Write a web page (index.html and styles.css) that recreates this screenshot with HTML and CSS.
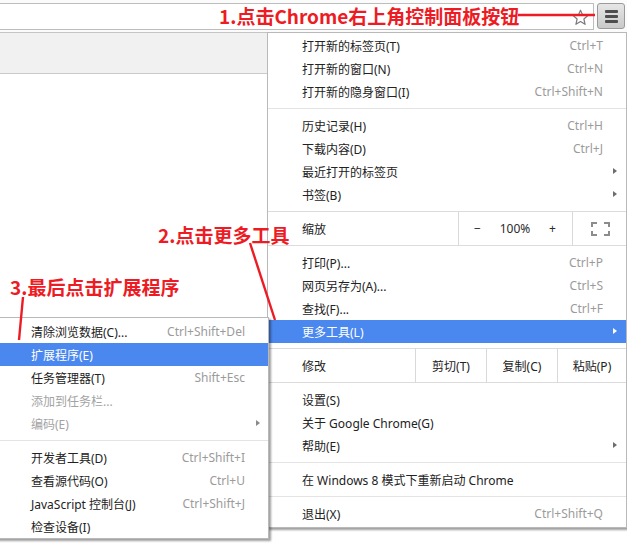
FILE: index.html
```html
<!DOCTYPE html>
<html lang="zh-CN">
<head>
<meta charset="utf-8">
<title>Chrome 扩展程序</title>
<link rel="stylesheet" href="styles.css">
</head>
<body>
<div class="browser">
  <div class="toolbar">
    <div class="omnibox">
      <svg class="star" width="17" height="17" viewBox="0 0 17 17"><path d="M8.5 1.2 L10.6 6.1 L15.9 6.5 L11.9 10 L13.1 15.3 L8.5 12.5 L3.9 15.3 L5.1 10 L1.1 6.5 L6.4 6.1 Z" fill="#fff" stroke="#7a7a7a" stroke-width="1.2" stroke-linejoin="round"/></svg>
    </div>
    <div class="menu-btn"><span></span><span></span><span></span></div>
  </div>
  <div class="bookmarks"></div>
  <div class="content"></div>
</div>

<div class="menu main-menu">
  <div class="item"><span class="label">打开新的标签页(T)</span><span class="key">Ctrl+T</span></div>
  <div class="item"><span class="label">打开新的窗口(N)</span><span class="key">Ctrl+N</span></div>
  <div class="item"><span class="label">打开新的隐身窗口(I)</span><span class="key">Ctrl+Shift+N</span></div>
  <div class="sep"></div>
  <div class="item"><span class="label">历史记录(H)</span><span class="key">Ctrl+H</span></div>
  <div class="item"><span class="label">下载内容(D)</span><span class="key">Ctrl+J</span></div>
  <div class="item sub"><span class="label">最近打开的标签页</span></div>
  <div class="item sub"><span class="label">书签(B)</span></div>
  <div class="sep sep-tight"></div>
  <div class="btn-row">
    <span class="label">缩放</span>
    <div class="cell zoom-cell"><span>−</span><span>100%</span><span>+</span></div>
    <div class="cell fs-cell">
      <svg width="19" height="14" viewBox="0 0 19 14"><path d="M1 5 V1 H6 M13 1 H18 V5 M18 9 V13 H13 M6 13 H1 V9" fill="none" stroke="#8c8c8c" stroke-width="2"/></svg>
    </div>
  </div>
  <div class="sep sep-tight"></div>
  <div class="item"><span class="label">打印(P)...</span><span class="key">Ctrl+P</span></div>
  <div class="item"><span class="label">网页另存为(A)...</span><span class="key">Ctrl+S</span></div>
  <div class="item"><span class="label">查找(F)...</span><span class="key">Ctrl+F</span></div>
  <div class="item sub active"><span class="label">更多工具(L)</span></div>
  <div class="sep sep-tight"></div>
  <div class="btn-row">
    <span class="label">修改</span>
    <div class="cell edit-cell">剪切(T)</div>
    <div class="cell edit-cell">复制(C)</div>
    <div class="cell edit-cell last">粘贴(P)</div>
  </div>
  <div class="sep sep-tight"></div>
  <div class="item"><span class="label">设置(S)</span></div>
  <div class="item"><span class="label">关于 Google Chrome(G)</span></div>
  <div class="item sub"><span class="label">帮助(E)</span></div>
  <div class="sep"></div>
  <div class="item"><span class="label">在 Windows 8 模式下重新启动 Chrome</span></div>
  <div class="sep"></div>
  <div class="item"><span class="label">退出(X)</span><span class="key">Ctrl+Shift+Q</span></div>
</div>

<div class="menu sub-menu">
  <div class="item"><span class="label">清除浏览数据(C)...</span><span class="key">Ctrl+Shift+Del</span></div>
  <div class="item active"><span class="label">扩展程序(E)</span></div>
  <div class="item"><span class="label">任务管理器(T)</span><span class="key">Shift+Esc</span></div>
  <div class="item disabled"><span class="label">添加到任务栏...</span></div>
  <div class="item sub disabled"><span class="label">编码(E)</span></div>
  <div class="sep"></div>
  <div class="item"><span class="label">开发者工具(D)</span><span class="key">Ctrl+Shift+I</span></div>
  <div class="item"><span class="label">查看源代码(O)</span><span class="key">Ctrl+U</span></div>
  <div class="item"><span class="label">JavaScript 控制台(J)</span><span class="key">Ctrl+Shift+J</span></div>
  <div class="item"><span class="label">检查设备(I)</span></div>
</div>

<svg class="pointers" width="627" height="552" viewBox="0 0 627 552">
  <line x1="518" y1="15" x2="595" y2="15" />
  <line x1="250" y1="243" x2="275" y2="320" />
  <line x1="23" y1="297" x2="19" y2="340" />
</svg>

<div class="note note-1">1.点击Chrome右上角控制面板按钮</div>
<div class="note note-2">2.点击更多工具</div>
<div class="note note-3">3.最后点击扩展程序</div>
</body>
</html>
```
FILE: styles.css
```css
* { box-sizing: border-box; }

html, body {
  margin: 0;
  padding: 0;
  width: 627px;
  height: 552px;
  overflow: hidden;
  background: #fff;
  font-family: "Noto Sans", "Noto Sans CJK SC", sans-serif;
  font-size: 12px;
  color: #222;
}

.browser {
  display: flex;
  flex-direction: column;
  height: 552px;
}

.toolbar {
  display: flex;
  align-items: flex-start;
  height: 33px;
  padding-top: 3px;
  background: #fbfbfb;
  border-bottom: 1px solid #c4c4c4;
}

.omnibox {
  flex: 1;
  height: 27px;
  margin-left: -1px;
  background: #fff;
  border: 1px solid #bdbdbd;
  display: flex;
  justify-content: flex-end;
  align-items: center;
  padding-right: 4px;
}

.star { display: block; margin-top: 1px; }

.menu-btn {
  width: 28px;
  height: 26px;
  margin-left: 3px;
  margin-right: 2px;
  border: 1px solid #9a9a9a;
  border-radius: 3px;
  background: linear-gradient(#e6e6e6, #c9c9c9);
  display: flex;
  flex-direction: column;
  align-items: center;
  justify-content: center;
  gap: 2px;
}

.menu-btn span {
  display: block;
  width: 13px;
  height: 3px;
  border-radius: 1px;
  background: #4d4d4d;
}

.bookmarks {
  height: 41px;
  background: #f1f1f1;
  border-bottom: 1px solid #cacaca;
}

.content { flex: 1; background: #fff; }

/* ---------- menus ---------- */
.menu {
  position: absolute;
  background: #fff;
  border: 1px solid #b9b9b9;
  box-shadow: 2px 2px 2px rgba(0, 0, 0, 0.38);
}

.main-menu {
  left: 267px;
  top: 32px;
  width: 360px;
  padding-top: 1px;
  padding-bottom: 2px;
  z-index: 1;
}

.sub-menu {
  left: -10px;
  top: 317px;
  width: 279px;
  padding-top: 2px;
  padding-bottom: 0;
  z-index: 2;
}

.item {
  position: relative;
  display: flex;
  align-items: center;
  height: 23px;
  padding: 0 23px 0 34px;
  white-space: nowrap;
}

.sub-menu .item { padding-left: 40px; }

.item .label { flex: 1; }

.item .key { color: #9b9b9b; }

.item.sub::after {
  content: "";
  position: absolute;
  right: 9px;
  top: 8px;
  border-left: 4px solid #6d6d6d;
  border-top: 3.5px solid transparent;
  border-bottom: 3.5px solid transparent;
}

.sub-menu .item.sub::after { right: 8px; }

.item.active {
  background: #4a87ee;
  color: #fff;
}

.item.active.sub::after { border-left-color: #fff; }

.item.disabled { color: #a3a3a3; }
.item.disabled.sub::after { border-left-color: #8a8a8a; }

.sep {
  height: 11px;
  display: flex;
  align-items: center;
}

.sep::before {
  content: "";
  flex: 1;
  height: 1px;
  background: #e3e3e3;
}

.sep-tight { height: 6px; align-items: flex-end; }
.sep-tight::before { background: #dcdcdc; }

.btn-row {
  display: flex;
  height: 33px;
  align-items: stretch;
}

.btn-row .label {
  flex: 1;
  display: flex;
  align-items: center;
  padding-left: 34px;
}

.btn-row + .sep-tight { align-items: flex-start; }

.cell {
  display: flex;
  align-items: center;
  justify-content: center;
  border-left: 1px solid #d9d9d9;
}

.zoom-cell {
  width: 114px;
  justify-content: space-between;
  padding: 0 16px 0 15px;
  color: #2b2b2b;
}

.fs-cell { width: 54px; }
.fs-cell svg { display: block; margin-left: 2px; }

.edit-cell { width: 71px; }
.edit-cell.last { width: 69px; }

/* ---------- annotations ---------- */
.pointers {
  position: absolute;
  left: 0;
  top: 0;
  z-index: 3;
  pointer-events: none;
}

.pointers line {
  stroke: #ed1c24;
  stroke-width: 2.4;
}

.note {
  position: absolute;
  z-index: 4;
  font-family: "Noto Sans CJK SC", sans-serif;
  font-weight: 700;
  font-size: 19px;
  line-height: 19px;
  color: #ed1c24;
  white-space: nowrap;
}

.note-1 { left: 219px; top: 6px; }
.note-2 { left: 158px; top: 225px; }
.note-3 { left: 10px; top: 277px; }
```
